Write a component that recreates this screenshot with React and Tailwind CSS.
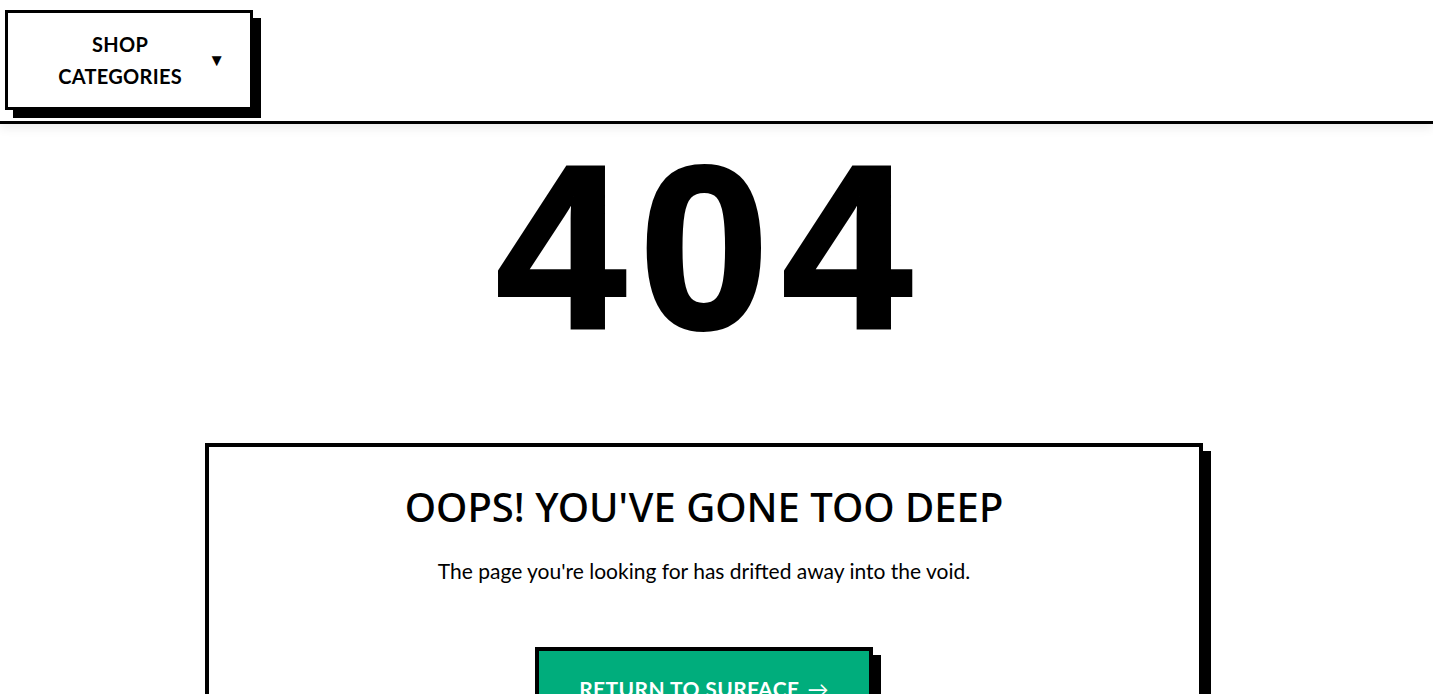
export default function App() {
  return (
    <div className="min-h-screen bg-white text-black" style={{ fontFamily: 'Lato, "Open Sans", sans-serif' }}>
      {/* Header */}
      <header className="relative z-10 h-[124px] border-b-[3px] border-black bg-white shadow-[0_4px_10px_rgba(0,0,0,0.08)]">
        <div className="pl-[5px] pt-[10px]">
          <button className="flex h-[100px] w-[248px] items-center border-[3px] border-black bg-white pl-[40px] pr-[25px] shadow-[8px_8px_0_#000]">
            <span className="flex-1 text-center text-[20px] font-bold leading-[32px] tracking-[0.3px]">
              SHOP
              <br />
              CATEGORIES
            </span>
            <span className="ml-4 text-[17px]">▼</span>
          </button>
        </div>
      </header>

      {/* Main */}
      <main className="pr-[25px]">
        <div className="flex flex-col items-center">
          <h1
            className="mt-[14px] pl-[14px] text-[232px] font-bold leading-[220px] tracking-[14px] [-webkit-text-stroke:4px_black]"
            style={{ fontFamily: '"Liberation Sans", Arial, sans-serif' }}
          >
            404
          </h1>

          <section className="mt-[85px] w-[998px] border-4 border-black bg-white px-10 pt-[32px] pb-10 text-center shadow-[8px_8px_0_#000]">
            <h2
              className="text-[40px] font-medium leading-[56px]"
              style={{ fontFamily: '"Noto Sans", "Open Sans", sans-serif' }}
            >
              OOPS! YOU'VE GONE TOO DEEP
            </h2>
            <p className="mt-[22px] text-[21px] leading-[28px]">
              The page you're looking for has drifted away into the void.
            </p>
            <div className="mt-[62px] flex justify-center">
              <a className="inline-flex items-center border-4 border-black bg-[#00ad7c] px-10 py-[24px] text-[21px] font-bold leading-[28px] tracking-[0.4px] text-white shadow-[8px_8px_0_#000]">
                RETURN TO SURFACE
                <span className="ml-2 font-normal">→</span>
              </a>
            </div>
          </section>
        </div>
      </main>
    </div>
  );
}
